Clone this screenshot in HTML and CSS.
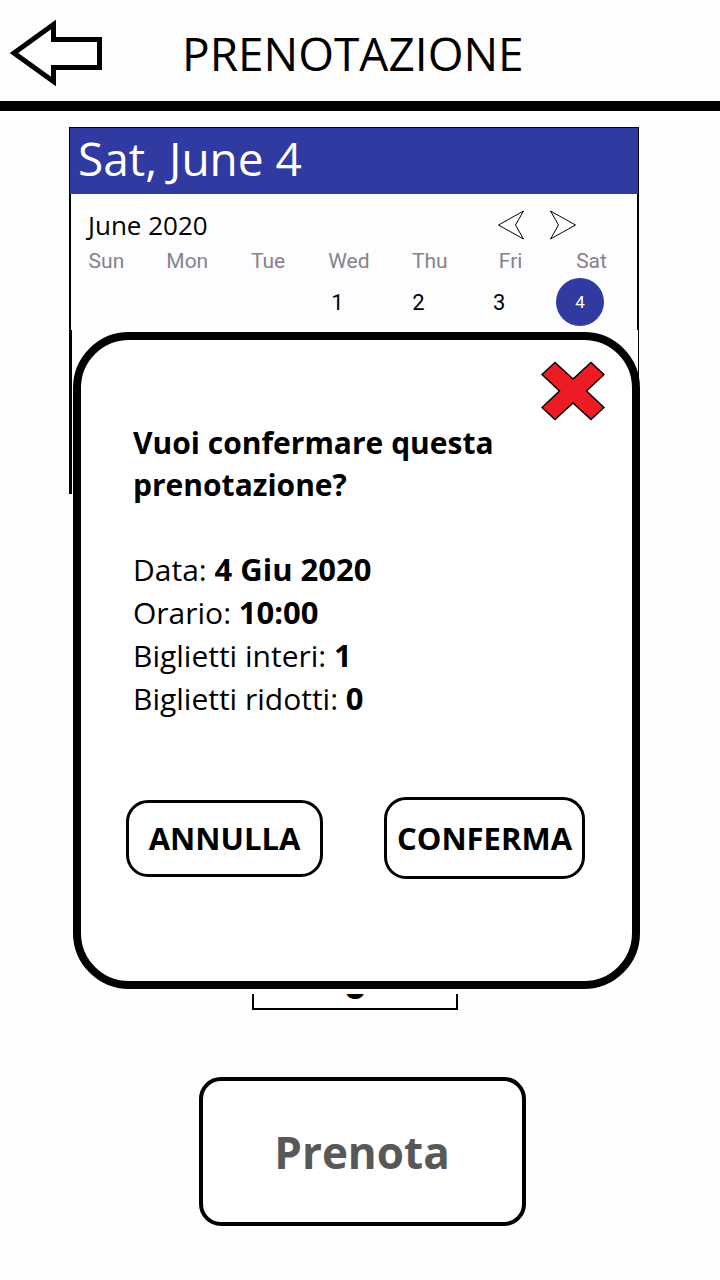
FILE: index.html
```html
<!DOCTYPE html>
<html lang="it">
<head>
<meta charset="utf-8">
<meta name="viewport" content="width=device-width, initial-scale=1">
<title>Prenotazione</title>
<link rel="stylesheet" href="styles.css">
</head>
<body>
<header class="topbar">
  <button class="icon-button" type="button" aria-label="Indietro">
    <svg width="92" height="66" viewBox="0 0 92 66" aria-hidden="true"><path d="M4 33 43.500 4.500V19.500H89.500V47.500H43.500V61.500Z" fill="#fff" stroke="#000" stroke-width="5"/></svg>
  </button>
  <h1 class="topbar-title">PRENOTAZIONE</h1>
</header>
<main class="content">
  <section class="calendar" aria-label="Calendario">
    <h2 class="calendar-date">Sat, June 4</h2>
    <div class="calendar-upper">
      <div class="month-row">
        <span class="month">June 2020</span>
        <div class="month-nav">
          <button class="icon-button" type="button" aria-label="Mese precedente">
            <svg width="28" height="30" viewBox="0 0 28 30" aria-hidden="true"><path d="M1.500 15 26.500 1 18.500 15 26.500 29Z" fill="#fff" stroke="#000"/></svg>
          </button>
          <button class="icon-button" type="button" aria-label="Mese successivo">
            <svg width="28" height="30" viewBox="0 0 28 30" aria-hidden="true"><path d="M26.500 15 1.500 1 9.500 15 1.500 29Z" fill="#fff" stroke="#000"/></svg>
          </button>
        </div>
      </div>
      <table class="days">
        <thead>
          <tr><th>Sun</th><th>Mon</th><th>Tue</th><th>Wed</th><th>Thu</th><th>Fri</th><th>Sat</th></tr>
        </thead>
        <tbody>
          <tr>
            <td></td><td></td><td></td>
            <td><button class="day" type="button">1</button></td>
            <td><button class="day" type="button">2</button></td>
            <td><button class="day" type="button">3</button></td>
            <td><button class="day day-selected" type="button">4</button></td>
          </tr>
        </tbody>
      </table>
    </div>
    <div class="calendar-lower"></div>
  </section>
  <input class="tickets" type="text" value="0" aria-label="Biglietti ridotti">
  <button class="book" type="button">Prenota</button>

  <div class="dialog" role="dialog" aria-labelledby="dialog-title">
    <button class="icon-button close" type="button" aria-label="Chiudi">
      <svg width="64" height="60" viewBox="0 0 64 60" aria-hidden="true"><path d="M1 13.500 14 1.500 32 18 50 1.500 63 13.500 45.500 30 63 46.500 50 58.500 32 42 14 58.500 1 46.500 18.500 30Z" fill="#ed1c24" stroke="#000" stroke-width="1.500"/></svg>
    </button>
    <div class="dialog-text">
      <h2 class="dialog-title" id="dialog-title">Vuoi confermare questa prenotazione?</h2>
      <p>Data: <strong>4 Giu 2020</strong></p>
      <p>Orario: <strong>10:00</strong></p>
      <p>Biglietti interi: <strong>1</strong></p>
      <p>Biglietti ridotti: <strong>0</strong></p>
    </div>
    <div class="actions">
      <button class="action action-cancel" type="button">ANNULLA</button>
      <button class="action action-confirm" type="button">CONFERMA</button>
    </div>
  </div>
</main>
</body>
</html>
```
FILE: styles.css
```css
* { box-sizing: border-box; }

body {
  margin: 0;
  background: #fefefe;
  color: #000;
  font-family: "Open Sans", "Noto Sans", sans-serif;
}

button, input { font: inherit; color: inherit; }

button { padding: 0; cursor: pointer; }

h1, h2, p { margin: 0; font-weight: 400; }

.icon-button {
  display: flex;
  border: 0;
  background: none;
}

.topbar {
  display: flex;
  align-items: center;
  gap: 80px;
  height: 111px;
  padding: 5px 10px 0;
  border-bottom: 10px solid #000;
}

.topbar-title {
  font-size: 46px;
  line-height: 60px;
}

.content {
  position: relative;
  display: flex;
  flex-direction: column;
  padding: 16px 81px 54px 69px;
}

.calendar-date {
  padding: 0 8px 6px;
  border: 1px solid #000;
  border-bottom: 0;
  background: #313aa1;
  color: #fff;
  font-size: 46px;
  line-height: 60px;
}

.calendar-upper {
  height: 136px;
  padding-top: 12px;
  border: solid #000;
  border-width: 0 2px;
}

.month-row {
  display: flex;
  align-items: center;
  justify-content: space-between;
  padding: 0 60px 0 17px;
}

.month {
  font-size: 26px;
  line-height: 38px;
}

.month-nav {
  display: flex;
  gap: 24px;
}

.days {
  width: 100%;
  table-layout: fixed;
  border-collapse: collapse;
  background: #fdfcfe;
  font-family: Roboto, sans-serif;
}

.days th {
  padding: 0 10px 0 0;
  color: #858388;
  font-size: 21px;
  font-weight: 400;
  line-height: 34px;
}

.days td { padding: 0 36px 0 0; }

.day {
  display: block;
  width: 48px;
  height: 48px;
  margin: 0 auto;
  border: 0;
  border-radius: 50%;
  background: none;
  font-size: 22px;
}

.day-selected {
  background: #313aa1;
  color: #fff;
  font-size: 17px;
}

.calendar-lower {
  height: 164px;
  border: solid #000;
  border-width: 0 1px 0 3px;
}

.tickets {
  align-self: center;
  width: 206px;
  height: 52px;
  margin: 464px 0 0 2px;
  padding: 0 0 4px;
  border: 2px solid #000;
  background: #fff;
  font-size: 42px;
  font-weight: 700;
  text-align: center;
}

.book {
  align-self: center;
  width: 327px;
  height: 149px;
  margin: 67px 0 0 16px;
  border: 4px solid #000;
  border-radius: 22px;
  background: #fff;
  color: #585858;
  font-size: 44px;
  font-weight: 700;
}

.dialog {
  position: absolute;
  top: 221px;
  right: 80px;
  left: 73px;
  padding: 21px 27px 102px 45px;
  border: 8px solid #000;
  border-radius: 56px;
  background: #fff;
  box-shadow: 0 5px 0 #fff;
}

.close { margin-left: auto; }

.dialog-text {
  padding: 1px 0 0 7px;
  font-size: 30px;
  line-height: 43px;
}

.dialog-text strong { font-size: 31px; }

.dialog-title {
  max-width: 400px;
  margin-bottom: 42px;
  font-size: 30px;
  font-weight: 700;
  line-height: 42px;
}

.actions {
  display: flex;
  align-items: center;
  justify-content: space-between;
  margin-top: 77px;
  padding-right: 20px;
}

.action {
  border: 3px solid #000;
  border-radius: 22px;
  background: #fff;
  font-size: 31px;
  font-weight: 700;
}

.action-cancel {
  width: 197px;
  height: 77px;
}

.action-confirm {
  width: 201px;
  height: 82px;
}
```
